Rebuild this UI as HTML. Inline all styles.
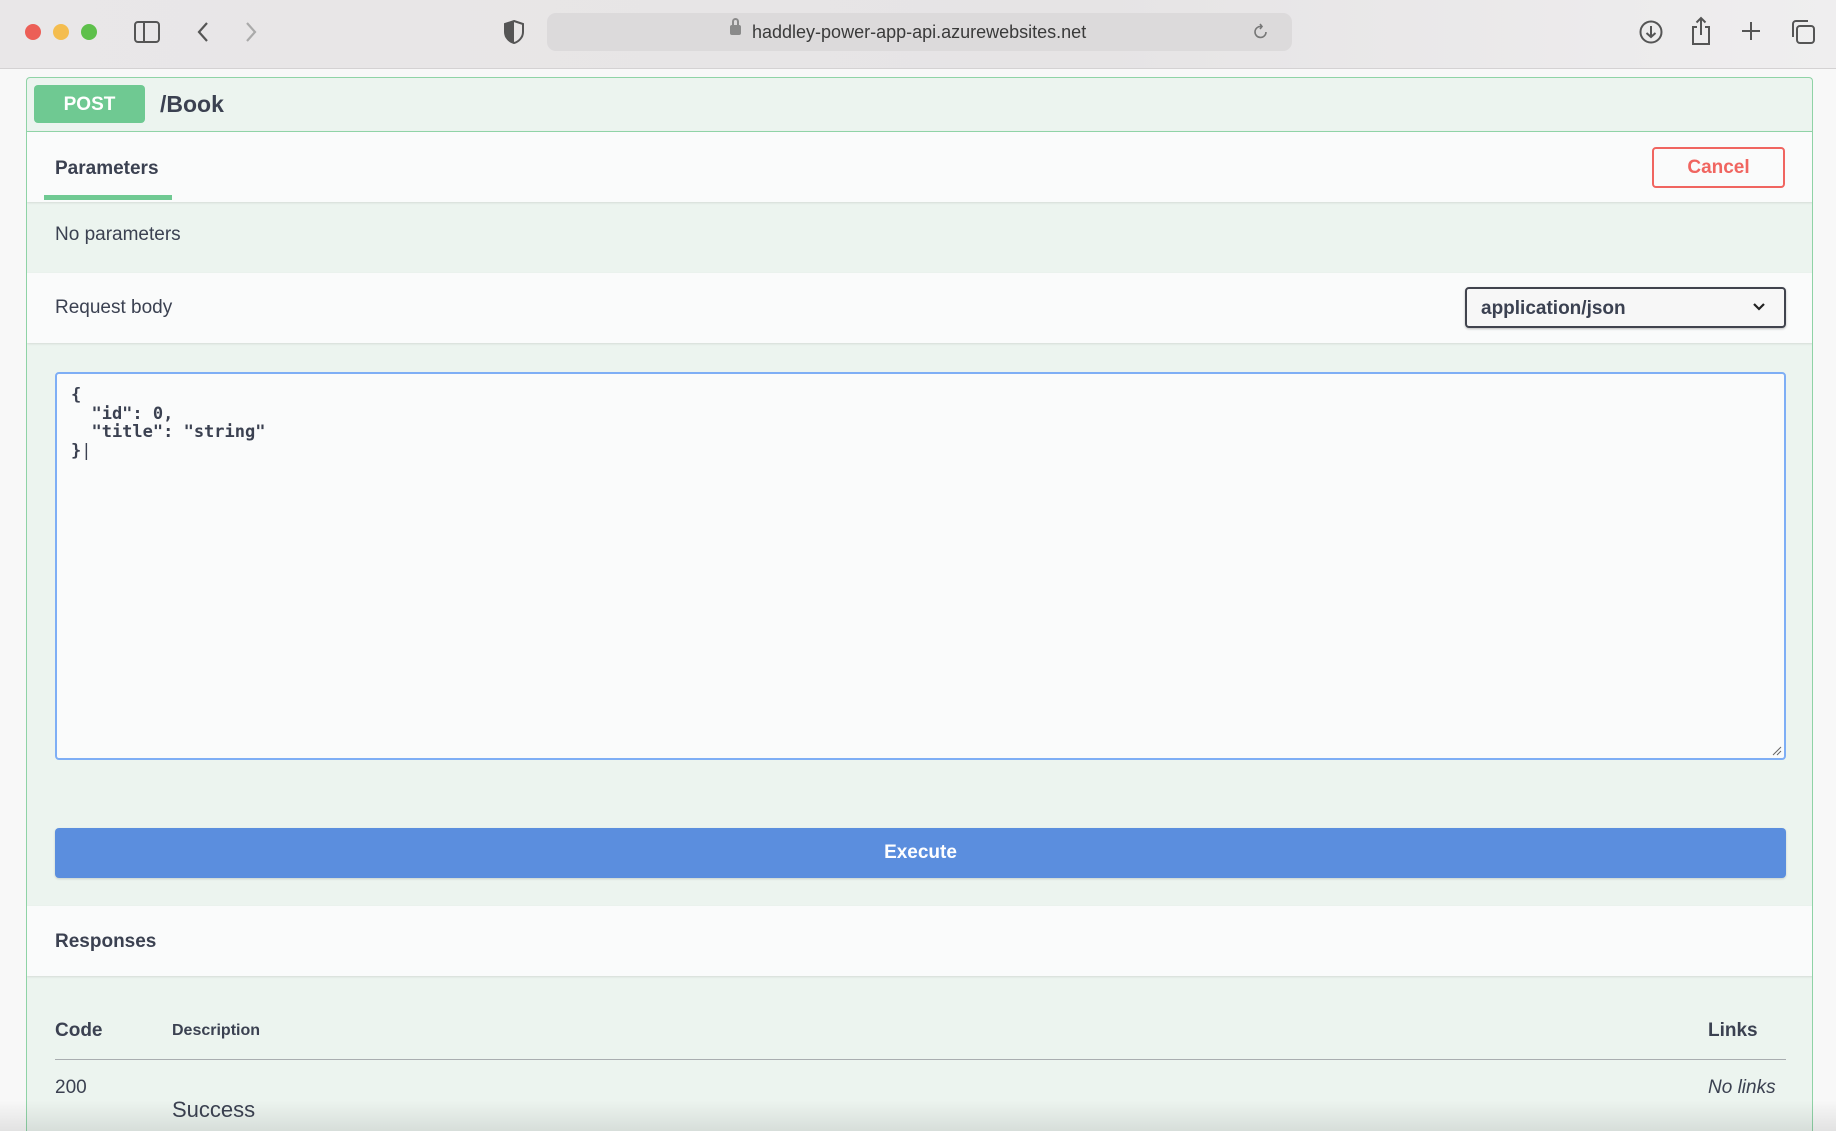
<!DOCTYPE html>
<html style="width:1836px;height:1131px;overflow:hidden"><head><meta charset="utf-8"><style>
*{box-sizing:border-box;margin:0;padding:0}
body{width:1836px;height:1131px;overflow:hidden;background:#f8f8f8;font-family:"Liberation Sans",Arial,sans-serif;position:relative;color:#3b4151}
.abs{position:absolute}
.tb{left:0;top:0;width:1836px;height:69px;background:linear-gradient(90deg,#e9e7e8,#e6e4e5 60%,#efeeef);border-bottom:1px solid #d4d2d3}
.dot{width:16px;height:16px;border-radius:50%;top:24px}
.url{left:547px;top:13px;width:745px;height:38px;background:#dcdadb;border-radius:9px;font-size:18px;color:#3a3a3a;line-height:38px}
.card{left:26px;top:77px;width:1787px;height:1054px;border:1px solid #8fd3a6;border-bottom:none;border-radius:4px 4px 0 0;background:#ecf4ef;overflow:hidden}
.white{background:#fafbfb}
.t{font-weight:bold}
</style></head><body>
<div class="abs tb">
 <div class="abs dot" style="left:25px;background:#ec5f57"></div>
 <div class="abs dot" style="left:53px;background:#f4bd4f"></div>
 <div class="abs dot" style="left:81px;background:#5ec04b"></div>
 <svg class="abs" style="left:133px;top:20px" width="28" height="24" viewBox="0 0 28 24" fill="none" stroke="#555" stroke-width="2"><rect x="2" y="2" width="24" height="20" rx="3"/><line x1="11" y1="2" x2="11" y2="22"/></svg>
 <svg class="abs" style="left:196px;top:20px" width="14" height="24" viewBox="0 0 14 24" fill="none" stroke="#555" stroke-width="2.2"><path d="M11 3 L3 12 L11 21"/></svg>
 <svg class="abs" style="left:244px;top:20px" width="14" height="24" viewBox="0 0 14 24" fill="none" stroke="#aaa" stroke-width="2.2"><path d="M3 3 L11 12 L3 21"/></svg>
 <svg class="abs" style="left:503px;top:19px" width="22" height="26" viewBox="0 0 22 26"><path d="M11 2 L20 5 V13 C20 19 15 23 11 24 C7 23 2 19 2 13 V5 Z" fill="none" stroke="#555" stroke-width="2"/><path d="M11 2 L2 5 V13 C2 19 7 23 11 24 Z" fill="#555"/></svg>
 <div class="abs url"><span style="position:absolute;left:183px;top:12px;width:11px;height:10px;background:#8a8a8a;border-radius:2px"></span><span style="position:absolute;left:185px;top:5px;width:7px;height:9px;border:2px solid #8a8a8a;border-radius:4px 4px 0 0"></span><span style="position:absolute;left:205px">haddley-power-app-api.azurewebsites.net</span>
 <svg style="position:absolute;left:705px;top:10px" width="18" height="18" viewBox="0 0 18 18" fill="none" stroke="#777" stroke-width="1.6"><path d="M14 9 A5.5 5.5 0 1 1 9 3.5"/><path d="M8 1 L10 3.5 L8 6"/></svg></div>
 <svg class="abs" style="left:1638px;top:19px" width="26" height="26" viewBox="0 0 26 26" fill="none" stroke="#555" stroke-width="2"><circle cx="13" cy="13" r="10.5"/><path d="M13 7 V18 M8.5 14 L13 18 L17.5 14"/></svg>
 <svg class="abs" style="left:1690px;top:16px" width="22" height="30" viewBox="0 0 22 30" fill="none" stroke="#555" stroke-width="2"><path d="M7 11 H3 V28 H19 V11 H15 M11 2 V19 M6.5 6.5 L11 2 L15.5 6.5"/></svg>
 <svg class="abs" style="left:1740px;top:20px" width="22" height="22" viewBox="0 0 22 22" stroke="#555" stroke-width="2"><path d="M11 2 V20 M2 11 H20"/></svg>
 <svg class="abs" style="left:1790px;top:19px" width="26" height="26" viewBox="0 0 26 26" fill="none" stroke="#555" stroke-width="2"><rect x="7" y="7" width="17" height="17" rx="3"/><path d="M3 18 V5 A3 3 0 0 1 6 2 H18"/></svg>
</div>

<div class="abs card">
 <div class="abs" style="left:7px;top:7px;width:111px;height:38px;background:#6fc992;border-radius:4px;color:#fff;font-weight:bold;font-size:19px;line-height:40px;text-align:center">POST</div>
 <div class="abs t" style="left:133px;top:13px;font-size:23px;color:#3b4151">/Book</div>
 <div class="abs white" style="left:0;top:53px;width:1787px;height:71px;border-top:1px solid #8fd3a6;box-shadow:0 1px 2px rgba(0,0,0,.1)">
  <div class="abs t" style="left:28px;top:26px;font-size:19px">Parameters</div>
  <div class="abs" style="left:17px;top:63px;width:128px;height:5px;background:#6fc992"></div>
  <div class="abs" style="left:1625px;top:15px;width:133px;height:41px;border:2px solid #f06560;border-radius:4px;color:#f06560;font-weight:bold;font-size:19px;line-height:37px;text-align:center">Cancel</div>
 </div>
 <div class="abs" style="left:28px;top:146px;font-size:19px">No parameters</div>
 <div class="abs white" style="left:0;top:195px;width:1787px;height:70px;box-shadow:0 1px 2px rgba(0,0,0,.1)">
  <div class="abs" style="left:28px;top:24px;font-size:19px">Request body</div>
  <div class="abs" style="left:1438px;top:14px;width:321px;height:41px;border:2px solid #41444e;border-radius:4px;background:#f7f7f7;box-shadow:0 1px 2px rgba(0,0,0,.25)">
   <span class="abs t" style="left:14px;top:9px;font-size:19px">application/json</span>
   <svg class="abs" style="left:285px;top:13px" width="14" height="10" viewBox="0 0 14 10" fill="none" stroke="#222" stroke-width="2.2"><path d="M2 2 L7 7 L12 2"/></svg>
  </div>
 </div>
 <div class="abs" style="left:28px;top:294px;width:1731px;height:388px;border:2px solid #7eaef5;border-radius:4px;background:#fafbfb">
  <pre class="abs t" style="left:14px;top:12px;font-family:'DejaVu Sans Mono','Liberation Mono',monospace;font-size:17px;line-height:18.5px;color:#3b4151">{
  "id": 0,
  "title": "string"
}<span style="font-weight:normal">|</span></pre>
  <svg class="abs" style="right:2px;bottom:2px" width="10" height="10" viewBox="0 0 10 10" stroke="#666" stroke-width="1"><path d="M1 9 L9 1 M5 9 L9 5"/></svg>
 </div>
 <div class="abs" style="left:28px;top:750px;width:1731px;height:50px;background:#5b8ede;border-radius:4px;color:#fff;font-weight:bold;font-size:19px;line-height:50px;text-align:center;box-shadow:0 1px 2px rgba(0,0,0,.15)">Execute</div>
 <div class="abs white" style="left:0;top:828px;width:1787px;height:70px;box-shadow:0 1px 2px rgba(0,0,0,.1)">
  <div class="abs t" style="left:28px;top:25px;font-size:19px">Responses</div>
 </div>
 <div class="abs t" style="left:28px;top:942px;font-size:19px">Code</div>
 <div class="abs t" style="left:145px;top:944px;font-size:16px">Description</div>
 <div class="abs t" style="left:1681px;top:942px;font-size:19px">Links</div>
 <div class="abs" style="left:28px;top:981px;width:1731px;height:1px;background:#a9adb0"></div>
 <div class="abs" style="left:28px;top:999px;font-size:19px">200</div>
 <div class="abs" style="left:145px;top:1019px;font-size:22px">Success</div>
 <div class="abs" style="left:1681px;top:999px;font-size:19px;font-style:italic">No links</div>
</div>
<div class="abs" style="left:0;top:1100px;width:1836px;height:31px;background:linear-gradient(180deg,rgba(0,0,0,0),rgba(0,0,0,.09))"></div>
</body></html>
